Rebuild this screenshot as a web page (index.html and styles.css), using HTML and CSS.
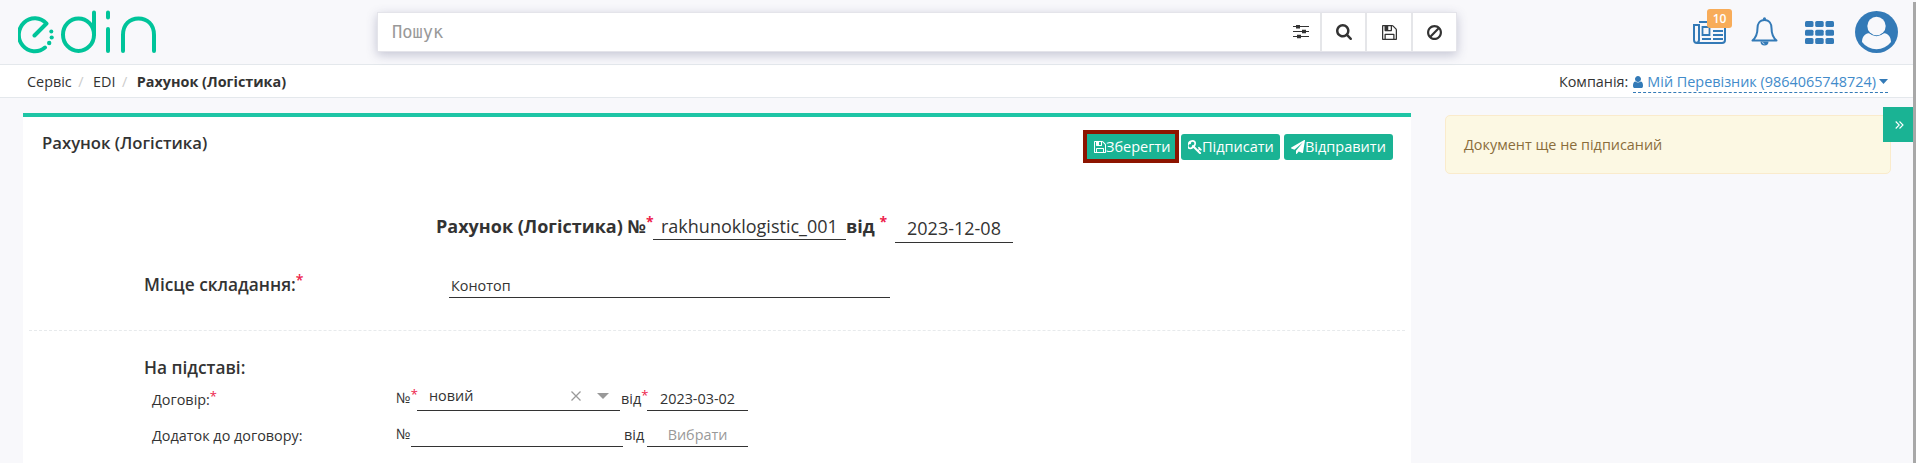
FILE: index.html
```html
<!DOCTYPE html>
<html lang="uk">
<head>
<meta charset="utf-8">
<title>Рахунок (Логістика)</title>
<link rel="stylesheet" href="styles.css">
</head>
<body>
<svg class="defs" width="0" height="0">
  <symbol id="floppy" viewBox="128 128 1536 1536"><path d="M512 1536h768v-384h-768v384zm896 0h128v-896q0-14-10-38.500t-20-34.500l-281-281q-10-10-34-20t-39-10v416q0 40-28 68t-68 28h-576q-40 0-68-28t-28-68v-416h-128v1280h128v-416q0-40 28-68t68-28h832q40 0 68 28t28 68v416zm-384-928v-320q0-13-9.500-22.500t-22.500-9.500h-192q-13 0-22.500 9.500t-9.500 22.500v320q0 13 9.500 22.500t22.500 9.500h192q13 0 22.500-9.500t9.500-22.500zm640 32v928q0 40-28 68t-68 28h-1344q-40 0-68-28t-28-68v-1344q0-40 28-68t68-28h928q40 0 88 20t76 48l280 280q28 28 48 76t20 88z"/></symbol>
</svg>
<header class="topbar">
  <a class="logo">
    <svg width="140" height="44" viewBox="0 0 140 44" fill="none" stroke="#00c49a" stroke-width="4" stroke-linecap="round" stroke-linejoin="round">
      <path d="M16.500 25.500 28.500 13.500A16 16.500 0 1 0 27 37.500"/>
      <ellipse cx="60.500" cy="24.700" rx="15.500" ry="16.300"/>
      <path d="M76 2.500v22M90 2.500v5M90 19v22M105 41V25c0-11 7-16.500 15.500-16.500S136 14 136 25v16"/>
      <g fill="#00c49a" stroke="none"><circle cx="33.300" cy="21.500" r="2"/><circle cx="33.700" cy="27.500" r="2.100"/><circle cx="31.200" cy="33" r="2.200"/></g>
    </svg>
  </a>
  <div class="search">
    <span class="search-text">Пошук</span>
    <svg class="sliders" width="16" height="14" viewBox="0 0 16 14"><path d="M0 1.500h16M0 6.500h16M0 11.500h16" stroke="#333" stroke-width="1.200"/><path d="M3 0h4v3.500H3zM9 4.800h4v3.500H9zM4 9.800h4v3.500H4z" fill="#333"/></svg>
    <span class="search-btn"><svg width="16" height="16" viewBox="64 128 1664 1664"><path d="M1216 832q0-185-131.500-316.500t-316.500-131.500-316.500 131.500-131.500 316.500 131.500 316.500 316.500 131.500 316.500-131.500 131.500-316.500zm512 832q0 52-38 90t-90 38q-54 0-90-38l-343-342q-179 124-399 124-143 0-273.500-55.500t-225-150-150-225-55.500-273.500 55.500-273.500 150-225 225-150 273.500-55.500 273.500 55.500 225 150 150 225 55.500 273.500q0 220-124 399l343 343q37 37 37 90z"/></svg></span>
    <span class="search-btn"><svg width="15" height="15"><use href="#floppy"/></svg></span>
    <span class="search-btn"><svg width="15" height="15" viewBox="128 123 1536 1541"><path d="M1440 893q0-161-87-295l-754 753q137 89 297 89 111 0 211.500-43.500t173.500-116.500 116-174.500 43-212.500zm-999 299l755-754q-135-91-300-91-148 0-273 73t-198 199-73 274q0 162 89 299zm1223-299q0 157-61 300t-163.500 246-245 164-298.500 61-298.500-61-245-164-163.500-246-61-300 61-299.500 163.500-245.500 245-164 298.500-61 298.500 61 245 164 163.500 245.500 61 299.500z"/></svg></span>
  </div>
  <nav class="tools">
    <a class="news">
      <svg width="33" height="23" viewBox="0 0 33 23" fill="none" stroke="#337ab7" stroke-width="2"><path d="M6 1h26v18a3 3 0 0 1-3 3H4a3 3 0 0 1-3-3V4h5M6 3v16a3 3 0 0 1-2.500 3"/><path d="M9.500 6h7v8h-7zM20 6h10M20 10h10M20 14h10M9 18h9M20 18h10" stroke-width="1.800"/></svg>
      <span class="badge">10</span>
    </a>
    <svg class="bell" width="27" height="29" viewBox="0 0 27 29"><path d="M13.500 3c-5 0-7 4-7 8 0 6-1.500 9.500-5 12.500h24c-3.500-3-5-6.500-5-12.500 0-4-2-8-7-8z" fill="none" stroke="#337ab7" stroke-width="2" stroke-linejoin="round"/><circle cx="13.500" cy="1.900" r="1.600" fill="#337ab7"/><path d="M9.500 24.500h8a4 4 0 0 1-8 0z" fill="#337ab7"/><path d="M11.500 25q.3 1.800 2 2" fill="none" stroke="#f8f8fb" stroke-width=".7"/></svg>
    <svg class="grid" width="29" height="23" viewBox="0 0 29 23" fill="#337ab7"><rect width="8.500" height="6" rx="1.500"/><rect x="10.200" width="8.500" height="6" rx="1.500"/><rect x="20.500" width="8.500" height="6" rx="1.500"/><rect y="8.700" width="8.500" height="6" rx="1.500"/><rect x="10.200" y="8.700" width="8.500" height="6" rx="1.500"/><rect x="20.500" y="8.700" width="8.500" height="6" rx="1.500"/><rect y="17" width="8.500" height="6" rx="1.500"/><rect x="10.200" y="17" width="8.500" height="6" rx="1.500"/><rect x="20.500" y="17" width="8.500" height="6" rx="1.500"/></svg>
    <svg class="avatar" width="43" height="42" viewBox="0 0 43 42"><ellipse cx="21.500" cy="21" rx="21.500" ry="21" fill="#337ab7"/><path d="M7 31c0-6 4-9 8-9 4 3.600 9 3.600 13 0 4 0 8 3 8 9a18 17.500 0 0 1-29 0z" fill="#f8f8fb"/><circle cx="21.500" cy="15" r="10.200" fill="#337ab7"/><circle cx="21.500" cy="15" r="9.200" fill="#f8f8fb"/></svg>
  </nav>
</header>
<div class="crumbs">
  <span>Сервіс</span><i>/</i><span>EDI</span><i>/</i><b>Рахунок (Логістика)</b>
  <div class="company"><span>Компанія:</span><a><svg width="10" height="12" viewBox="256 128 1280 1536"><path d="M1536 1399q0 109-62.500 187t-150.500 78h-854q-88 0-150.500-78t-62.500-187q0-85 8.500-160.500t31.500-152 58.500-131 94-89 134.500-34.500q131 128 313 128t313-128q76 0 134.500 34.500t94 89 58.500 131 31.500 152 8.500 160.500zm-256-887q0 159-112.500 271.500t-271.500 112.500-271.500-112.500-112.500-271.500 112.500-271.500 271.500-112.500 271.500 112.500 112.500 271.500z"/></svg><span class="company-name">Мій Перевізник (9864065748724)</span><svg width="9" height="5" viewBox="0 0 9 5"><path d="M0 0h9L4.500 5z"/></svg></a></div>
</div>
<main class="content">
  <section class="panel">
    <div class="panel-head">
      <h1>Рахунок (Логістика)</h1>
      <div class="actions">
        <div class="marked"><button class="btn save"><svg width="12" height="12"><use href="#floppy"/></svg><span>Зберегти</span></button></div>
        <button class="btn sign"><svg width="14" height="14" viewBox="128 128 1560 1560"><path d="M832 512q0-80-56-136t-136-56-136 56-56 136q0 42 19 83-41-19-83-19-80 0-136 56t-56 136 56 136 136 56 136-56 56-136q0-42-19-83 41 19 83 19 80 0 136-56t56-136zm851 704q0 17-49 66t-66 49q-9 0-28.500-16t-36.500-33-38.500-40-24.500-26l-96 96 220 220q28 28 28 68 0 42-39 81t-81 39q-40 0-68-28l-671-671q-176 131-365 131-163 0-265.500-102.500t-102.500-265.500q0-160 95-313t248-248 313-95q163 0 265.500 102.500t102.500 265.500q0 189-131 365l355 355 96-96q-3-3-26-24.500t-40-38.500-33-36.500-16-28.500q0-17 49-66t66-49q13 0 23 10 6 6 46 44.500t82 79.500 86.500 86 73 78 28.500 41z"/></svg><span>Підписати</span></button>
        <button class="btn send"><svg width="14" height="14" viewBox="0 0 1792 1792"><path d="M1764 11q33 24 27 64l-256 1536q-5 29-32 45-14 8-31 8-11 0-24-5l-453-185-242 295q-18 23-49 23-13 0-22-4-19-7-30.500-23.500t-11.500-36.500v-349l864-1059-1069 925-395-162q-37-14-40-55-2-40 32-59l1664-960q15-9 32-9 20 0 36 11z"/></svg><span>Відправити</span></button>
      </div>
    </div>
    <div class="row title-row">
      <b class="title-label">Рахунок (Логістика) №<em>*</em></b>
      <span class="field number">rakhunoklogistic_001</span>
      <b class="title-from">від <em>*</em></b>
      <span class="field title-date">2023-12-08</span>
    </div>
    <div class="row place-row">
      <h2>Місце складання:<em>*</em></h2>
      <span class="field place">Конотоп</span>
    </div>
    <div class="basis">
      <h2>На підставі:</h2>
      <div class="row contract">
        <span class="name">Договір:<em>*</em></span>
        <span class="no">№<em>*</em></span>
        <span class="field select"><span class="value">новий</span><svg width="10" height="10" viewBox="0 0 10 10"><path d="M.500.500l9 9M9.500.500l-9 9" stroke="#999" stroke-width="1.300"/></svg><svg width="12" height="6" viewBox="0 0 12 6"><path d="M0 0h12L6 6z" fill="#999"/></svg></span>
        <span class="from">від<em>*</em></span>
        <span class="field date">2023-03-02</span>
      </div>
      <div class="row annex">
        <span class="name">Додаток до договору:</span>
        <span class="no">№</span>
        <span class="field annex-no"></span>
        <span class="from">від</span>
        <span class="field date empty">Вибрати</span>
      </div>
    </div>
  </section>
  <aside class="alert">Документ ще не підписаний</aside>
</main>
<button class="toggle"><svg width="9" height="8" viewBox="0 0 9 8" fill="none" stroke="#fff" stroke-width="1.100"><path d="M.7.500 4.200 4 .7 7.500M4.500.500 8 4 4.500 7.500"/></svg></button>
<div class="scroll-thumb"></div>
</body>
</html>
```
FILE: styles.css
```css
* { box-sizing: border-box; }
body { margin: 0; height: 463px; overflow: hidden; background: #f8f8fb; color: #333; font: 14.400px/20px "Open Sans", "Noto Sans", sans-serif; }
.defs { position: absolute; }
svg { display: block; flex: none; }
em { font-style: normal; color: #ed1c4b; }
h1, h2 { margin: 0; }
.topbar { display: flex; align-items: flex-start; height: 65px; border-bottom: 1px solid #e4e8ec; }
.logo { width: 377px; padding: 10px 0 0 18px; }
.search { display: flex; width: 1080px; height: 40px; margin-top: 12px; background: #fff; border: 1px solid #e4e4ea; box-shadow: 0 3px 10px rgba(60, 65, 110, .28); align-items: center; }
.search-text { flex: 1; padding-left: 14px; color: #999; font: 17px/24px "DejaVu Sans Mono", monospace; }
.sliders { margin-right: 11px; }
.search-btn { display: flex; align-items: center; justify-content: center; width: 45.300px; height: 38px; border-left: 2px solid #e5e6e9; fill: #333; }
.tools { display: flex; flex: 1; }
.news { position: relative; margin: 21px 0 0 236px; }
.badge { position: absolute; left: 14px; top: -12px; width: 25px; height: 19px; border-radius: 3px; background: #f8ac59; color: #fff; text-align: center; font-weight: 600; font-size: 12px; line-height: 19px; }
.bell { margin: 17px 0 0 25px; }
.grid { margin: 21px 0 0 27px; }
.avatar { margin: 11px 0 0 21px; }
.crumbs { display: flex; align-items: center; height: 33px; padding: 2px 28px 0 27px; background: #fff; border-bottom: 1px solid #e4e8ec; }
.crumbs i { font-style: normal; color: #ccc; padding: 0 9.500px 0 6.500px; }
.company { display: flex; gap: 5px; margin-left: auto; }
.company a { display: flex; align-items: center; color: #428bca; fill: #337ab7; border-bottom: 1px dashed #337ab7; }
.company-name { padding: 0 3px 0 4px; }
.content { display: flex; align-items: flex-start; gap: 34px; padding: 15px 0 0 23px; }
.panel { width: 1388px; height: 350px; background: #fff; border-top: 4px solid #1ec5a5; }
.panel-head { display: flex; justify-content: space-between; height: 74px; padding: 13px 18px 0 19px; }
.panel-head h1 { margin-top: 3px; font-size: 16.700px; font-weight: 600; line-height: 20px; }
.actions { display: flex; align-items: flex-start; }
.marked { border: 4px solid #8d1400; width: 96px; height: 33px; margin-right: 2px; }
.btn { display: flex; align-items: center; height: 26px; margin: 4px 0 0; padding: 0 0 0 7px; border: 0; border-radius: 3px; background: #1ab394; color: #fff; fill: #fff; font: 14.500px/20px "Open Sans", sans-serif; }
.save { width: 88px; height: 25px; margin: 0; padding-left: 7px; border-radius: 0; }
.sign { width: 99px; margin-right: 4px; }
.send { width: 109px; }
.row { display: flex; align-items: flex-start; }
.field { border-bottom: 1px solid #333; }
.title-row { height: 70px; padding: 22px 0 0 413px; font-size: 18px; line-height: 26px; }
.title-row em, .place-row em { font-size: 14px; position: relative; top: -6px; line-height: 1; }
.title-label { width: 217px; white-space: nowrap; }
.number { width: 193px; height: 27px; padding-left: 8px; }
.title-from { width: 49px; white-space: nowrap; }
.title-date { width: 118px; height: 30px; padding-top: 2px; text-align: center; }
h2 { font-size: 17.300px; font-weight: 600; line-height: 24px; }
.place-row { height: 69px; margin: 0 6px 0 6px; padding: 11px 0 0 115px; }
.place-row h2 { width: 305px; padding-top: 1px; }
.place { width: 441px; height: 26px; padding: 4px 0 0 2px; }
.basis { margin: 0 6px; padding: 25px 0 0 115px; border-top: 1px dashed #e7eaec; }
.contract { height: 36px; margin-top: 9px; }
.row.contract em { position: relative; top: -4px; font-size: 13px; line-height: 1; }
.name { width: 252px; padding: 1px 0 0 8px; }
.no { margin-top: -1px; width: 21px; }
.from { width: 27px; padding-left: 1px; white-space: nowrap; }
.select { display: flex; width: 203px; height: 22px; padding: 0 11px 8px 12px; align-items: center; }
.value { flex: 1; }
.select svg + svg { margin-left: 16px; }
.date { width: 101px; text-align: center; height: 22px; }
.annex .no { width: 15px; }
.annex-no { width: 212px; height: 22px; }
.annex .from { width: 24px; }
.empty { color: #999; }
.alert { width: 446px; height: 59px; margin-top: 2px; padding: 19px 18px; border: 1px solid #faebcc; border-radius: 5px; background: #fcf8e3; color: #8a6d3b; }
.toggle { position: absolute; left: 1883px; top: 107px; display: flex; align-items: center; justify-content: center; width: 30px; height: 35px; padding: 0 0 0 3px; border: 0; background: #1ab394; }
.scroll-thumb { position: absolute; right: 0; top: 2px; width: 3px; height: 461px; background: #a8a8a8; }
```
